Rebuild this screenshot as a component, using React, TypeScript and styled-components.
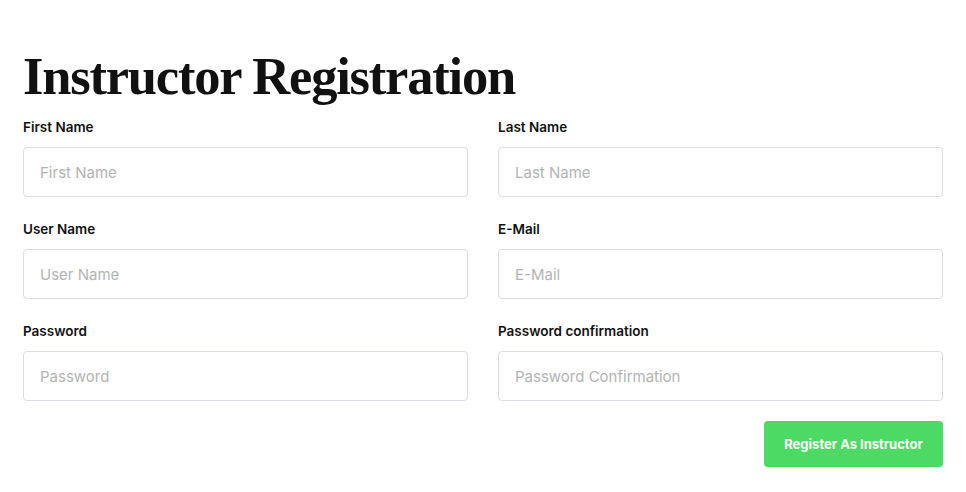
import styled, { createGlobalStyle } from "styled-components";

const GlobalStyle = createGlobalStyle`
  body {
    margin: 0;
    background: #ffffff;
    font-family: Inter, "Liberation Sans", sans-serif;
    color: #111111;
  }
  * {
    box-sizing: border-box;
  }
`;

const fields = [
  { label: "First Name", placeholder: "First Name" },
  { label: "Last Name", placeholder: "Last Name" },
  { label: "User Name", placeholder: "User Name" },
  { label: "E-Mail", placeholder: "E-Mail" },
  { label: "Password", placeholder: "Password" },
  { label: "Password confirmation", placeholder: "Password Confirmation" },
];

export default function App() {
  return (
    <>
      <GlobalStyle />
      <Page>
        <Title>Instructor Registration</Title>
        <Form onSubmit={(e) => e.preventDefault()}>
          <Grid>
            {fields.map((f) => (
              <Field key={f.label}>
                <Label>{f.label}</Label>
                <Input type="text" placeholder={f.placeholder} />
              </Field>
            ))}
          </Grid>
          <Footer>
            <SubmitButton type="submit">Register As Instructor</SubmitButton>
          </Footer>
        </Form>
      </Page>
    </>
  );
}

const Page = styled.div`
  padding: 44px 23px 24px 23px;
`;

const Title = styled.h1`
  margin: 0 0 9px 0;
  font-family: "Liberation Serif", "DejaVu Serif", serif;
  font-weight: 700;
  font-size: 52.5px;
  line-height: 64px;
  letter-spacing: -1.2px;
  color: #111111;
`;

const Form = styled.form`
  display: flex;
  flex-direction: column;
`;

const Grid = styled.div`
  display: grid;
  grid-template-columns: 1fr 1fr;
  column-gap: 30px;
  row-gap: 22px;
`;

const Field = styled.div`
  display: flex;
  flex-direction: column;
`;

const Label = styled.label`
  font-size: 13.5px;
  font-weight: 600;
  line-height: 20px;
  margin-bottom: 10px;
  color: #111111;
`;

const Input = styled.input`
  height: 50px;
  width: 100%;
  padding: 0 16px;
  border: 1px solid #dcdce2;
  border-radius: 4px;
  font-family: Inter, "Liberation Sans", sans-serif;
  font-size: 15px;
  color: #333333;
  outline: none;

  &::placeholder {
    color: #b4b4b4;
  }
`;

const Footer = styled.div`
  display: flex;
  justify-content: flex-end;
  margin-top: 20px;
`;

const SubmitButton = styled.button`
  width: 179px;
  height: 46px;
  border: none;
  border-radius: 4px;
  background: #4cd964;
  color: #ffffff;
  font-family: Inter, "Liberation Sans", sans-serif;
  font-size: 13px;
  font-weight: 700;
  cursor: pointer;
`;
